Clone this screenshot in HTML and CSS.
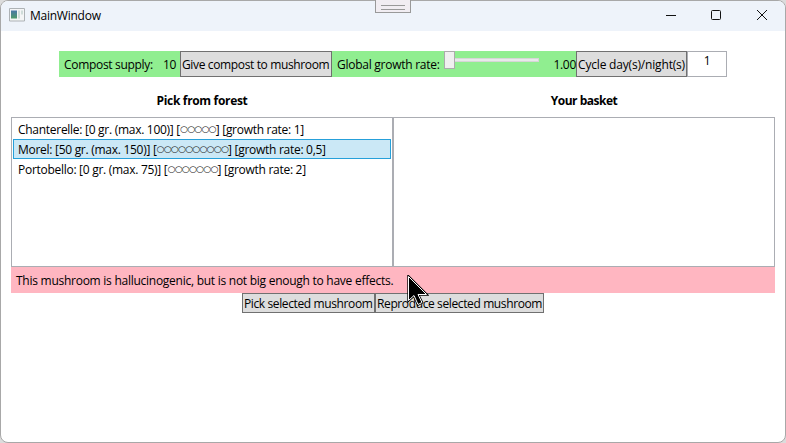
FILE: index.html
```html
<!DOCTYPE html>
<html lang="en">
<head>
<meta charset="utf-8">
<title>MainWindow</title>
<link rel="stylesheet" href="styles.css">
</head>
<body>
<div class="window">
  <header class="titlebar">
    <svg class="app-icon" width="16" height="14" viewBox="0 0 16 14"><defs><linearGradient id="g" x2="0" y2="1"><stop stop-color="#4a78a8"/><stop offset="1" stop-color="#4f9a6a"/></linearGradient></defs><path d="M.5.5h15v12.500H.5z" fill="#f4f5f6" stroke="#adb2b5"/><path d="M2 2.500h6v8H2z" fill="url(#g)"/><path d="M9 2.500h2v8H9zM12 2.500h2v4h-2z" fill="#cfdcd9"/></svg>
    <span class="title">MainWindow</span>
    <svg class="controls" width="104" height="12" viewBox="0 0 104 12" fill="none" stroke="#111"><path d="M0 6.500h10"/><rect x="45.500" y="1.500" width="9" height="9" rx="1"/><path d="M91 1l10 10M101 1L91 11"/></svg>
  </header>
  <main class="content">
    <div class="toolbar">
      <div class="supply"><span class="t-supply">Compost supply:</span><span class="t-ten">10</span></div>
      <button class="b-give"><span class="t-give">Give compost to mushroom</span></button>
      <div class="growth">
        <span class="t-global">Global growth rate:</span>
        <div class="slider"><div class="thumb"></div><div class="track"></div></div>
        <span class="t-rate">1.00</span>
      </div>
      <button class="b-cycle"><span class="t-cycle">Cycle day(s)/night(s)</span></button>
      <div class="days">1</div>
    </div>
    <div class="headings"><h2><span class="t-pick">Pick from forest</span></h2><h2><span class="t-basket">Your basket</span></h2></div>
    <div class="lists">
      <ul class="list">
        <li><span>Chanterelle: [0 gr. (max. 100)] [</span><span class="dots">○○○○○</span><span>] [growth rate: 1]</span></li>
        <li class="selected"><span>Morel: [50 gr. (max. 150)] [</span><span class="dots">○○○○○○○○○○</span><span>] [growth rate: 0,5]</span></li>
        <li><span>Portobello: [0 gr. (max. 75)] [</span><span class="dots">○○○○○○○</span><span>] [growth rate: 2]</span></li>
      </ul>
      <ul class="list"></ul>
    </div>
    <div class="message"><span class="t-msg">This mushroom is hallucinogenic, but is not big enough to have effects.</span></div>
    <div class="actions"><button class="b-pick"><span class="t-psel">Pick selected mushroom</span></button><button class="b-repro"><span class="t-repro">Reproduce selected mushroom</span></button></div>
  </main>
</div>
<div class="grip"></div>
<svg class="cursor" width="22" height="32" viewBox="0 0 22 32"><path d="M1.500 1.500v24l5.500-5 4 9 4-2-4-8h8.500z" fill="#000" stroke="#000" stroke-width="2.400"/><path d="M1.500 1.500v24l5.500-5 4 9 4-2-4-8h8.500z" fill="#000" stroke="#fff"/></svg>
</body>
</html>
```
FILE: styles.css
```css
* { box-sizing: border-box; }
body { margin: 0; width: 786px; height: 443px; overflow: hidden; background: #dcdcdc; color: #000; font: 12px/16px "Open Sans", "Noto Sans", sans-serif; letter-spacing: -0.28px; white-space: nowrap; }
.window { height: 443px; border: 1px solid #a8a8a8; border-radius: 8px; background: #fff; overflow: hidden; }
.titlebar { display: flex; align-items: center; height: 30px; padding: 0 17px 0 8px; background: #eef3fa; }
.app-icon { margin-top: -2px; }
.title { margin-left: 5px; letter-spacing: -0.25px; }
.controls { margin-left: auto; margin-right: -2px; margin-top: -2px; }
.content { padding: 20px 10px 0; }
.toolbar { display: flex; height: 26px; margin-left: 48px; }
.supply, .growth { display: flex; background: #90ee90; padding-top: 6px; }
.supply { width: 121px; padding-left: 5px; }
.t-supply { width: 99px; letter-spacing: -0.31px; }
.growth { width: 244px; padding-left: 5px; }
.t-global { width: 107px; letter-spacing: -0.26px; }
button { display: flex; justify-content: flex-start; align-items: center; padding: 1px 0 0 1px; border: 1px solid #707070; border-radius: 0; background: #ddd; color: #000; font: inherit; letter-spacing: inherit; text-align: left; }
.b-give { width: 152px; padding-top: 2px; }
.t-give { letter-spacing: -0.36px; }
.b-cycle { width: 111px; padding-top: 2px; }
.t-cycle { letter-spacing: -0.18px; }
.slider { display: flex; width: 95px; height: 18px; margin-top: -6px; }
.thumb { width: 11px; height: 18px; border: 1px solid #acacac; background: #f0f0f0; }
.track { width: 84px; height: 4px; margin-top: 7px; border: 1px solid #d6d6d6; border-left: 0; background: #e7eaea; }
.t-rate { margin-left: auto; }
.days { width: 40px; border: 1px solid #abadb3; text-align: center; line-height: 18px; }
.headings { display: flex; height: 40px; padding-top: 16px; }
h2 { width: 382px; margin: 0; font: bold 12px/16px "Open Sans", sans-serif; text-align: center; }
.t-pick { letter-spacing: -0.33px; }
.t-basket { letter-spacing: -0.5px; }
.lists { display: flex; height: 150px; }
.list { width: 382px; margin: 0; padding: 1px; border: 1px solid #abadb3; list-style: none; }
li { display: flex; height: 20px; padding-left: 4px; border: 1px solid transparent; line-height: 20px; }
.selected { border-color: #26a0da; background: #cbe8f6; }
.dots { font: 9px/18px "DejaVu Sans", sans-serif; letter-spacing: -0.7px; color: #222; }
.message { height: 26px; padding: 6px 5px; background: #ffb6c1; }
.t-msg { letter-spacing: -0.26px; }
.actions { display: flex; height: 20px; margin-left: 231px; }
.t-psel, .t-repro { letter-spacing: -0.38px; }
.b-pick { width: 133px; }
.b-repro { width: 169px; }
.grip { position: absolute; left: 375px; top: -1px; width: 36px; height: 14px; border: 1px solid #999; background: #f1edf2; }
.grip::after { content: ""; display: block; width: 24px; height: 3px; margin: 5px; border: solid #999; border-width: 1px 0; }
.cursor { position: absolute; left: 407px; top: 275px; }
```
